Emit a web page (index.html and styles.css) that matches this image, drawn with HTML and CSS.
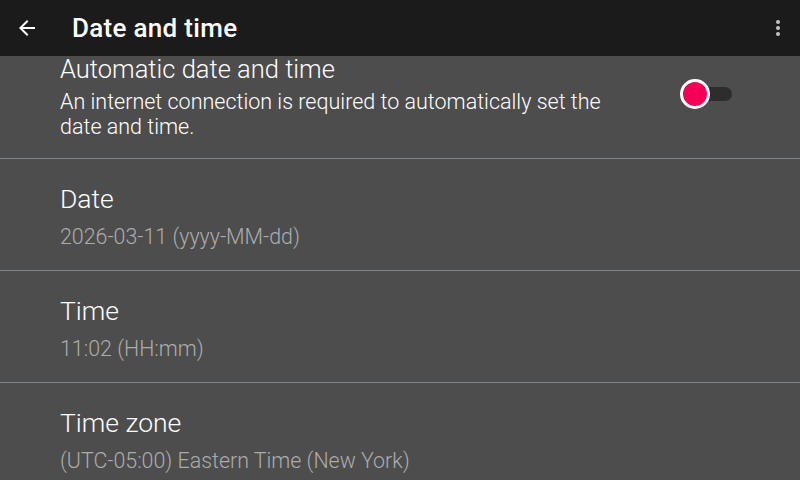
FILE: index.html
```html
<!DOCTYPE html>
<html lang="en">
<head>
    <meta charset="UTF-8">
    <title>Date and time</title>
    <link rel="stylesheet" href="styles.css">
</head>
<body>
<div class="screen">
    <div class="app-bar">
        <svg class="back-icon" viewBox="0 0 24 24" width="24" height="24">
            <path d="M20 11H7.83l5.59-5.59L12 4l-8 8 8 8 1.41-1.41L7.83 13H20v-2z" fill="#ffffff"/>
        </svg>
        <div class="bar-title">Date and time</div>
        <div class="menu-dots">
            <span></span><span></span><span></span>
        </div>
    </div>

    <div class="settings-list">
        <div class="setting-row first-row">
            <div class="setting-text">
                <div class="setting-title">Automatic date and time</div>
                <div class="setting-desc">An internet connection is required to automatically set the date and time.</div>
            </div>
            <div class="switch">
                <div class="switch-track"></div>
                <div class="switch-thumb"></div>
            </div>
        </div>
        <div class="setting-row">
            <div class="setting-text">
                <div class="setting-title">Date</div>
                <div class="setting-summary">2026-03-11 (yyyy-MM-dd)</div>
            </div>
        </div>
        <div class="setting-row">
            <div class="setting-text">
                <div class="setting-title">Time</div>
                <div class="setting-summary">11:02 (HH:mm)</div>
            </div>
        </div>
        <div class="setting-row">
            <div class="setting-text">
                <div class="setting-title">Time zone</div>
                <div class="setting-summary">(UTC-05:00) Eastern Time (New York)</div>
            </div>
        </div>
    </div>
</div>
</body>
</html>
```

FILE: styles.css
```css
body {
    margin: 0;
    font-family: Roboto, "Liberation Sans", sans-serif;
    background-color: #4d4d4d;
    overflow: hidden;
}

.screen {
    width: 800px;
    height: 480px;
    overflow: hidden;
    position: relative;
}

.app-bar {
    height: 56px;
    background-color: #1b1b1b;
    display: flex;
    align-items: center;
    position: relative;
    z-index: 2;
}

.back-icon {
    margin-left: 15px;
    width: 24px;
    height: 24px;
}

.bar-title {
    margin-left: 33px;
    color: #ffffff;
    font-size: 26px;
    font-weight: 500;
    letter-spacing: 0.3px;
}

.menu-dots {
    margin-left: auto;
    margin-right: 20px;
    display: flex;
    flex-direction: column;
    gap: 2px;
}

.menu-dots span {
    width: 4px;
    height: 4px;
    border-radius: 50%;
    background-color: #c4c4c4;
}

.settings-list {
    margin-top: -10px;
}

.setting-row {
    height: 112px;
    border-bottom: 1px solid #7b8592;
    box-sizing: border-box;
    display: flex;
    align-items: center;
    padding-left: 60px;
}

.first-row {
    height: 113px;
    align-items: flex-start;
    padding-top: 6px;
}

.setting-text {
    flex: 1;
    padding-top: 3px;
}

.first-row .setting-text {
    padding-top: 0;
}

.setting-title {
    color: #ffffff;
    font-size: 26.5px;
    font-weight: 300;
    line-height: 34px;
}

.first-row .setting-title {
    font-size: 25.5px;
}

.setting-desc {
    color: #ffffff;
    font-size: 21.5px;
    font-weight: 300;
    line-height: 25px;
    width: 570px;
    margin-top: 3px;
}

.setting-summary {
    color: #acacac;
    font-size: 21.4px;
    font-weight: 300;
    line-height: 26px;
    margin-top: 8px;
}

.switch {
    position: relative;
    width: 56px;
    height: 40px;
    margin-right: 68px;
    margin-top: 22px;
}

.switch-track {
    position: absolute;
    left: 20px;
    top: 13px;
    width: 36px;
    height: 14px;
    border-radius: 7px;
    background-color: #2d2d2d;
}

.switch-thumb {
    position: absolute;
    left: 4px;
    top: 5px;
    width: 24px;
    height: 24px;
    border-radius: 50%;
    background-color: #f50057;
    border: 3px solid #ffffff;
    box-sizing: content-box;
}
```
